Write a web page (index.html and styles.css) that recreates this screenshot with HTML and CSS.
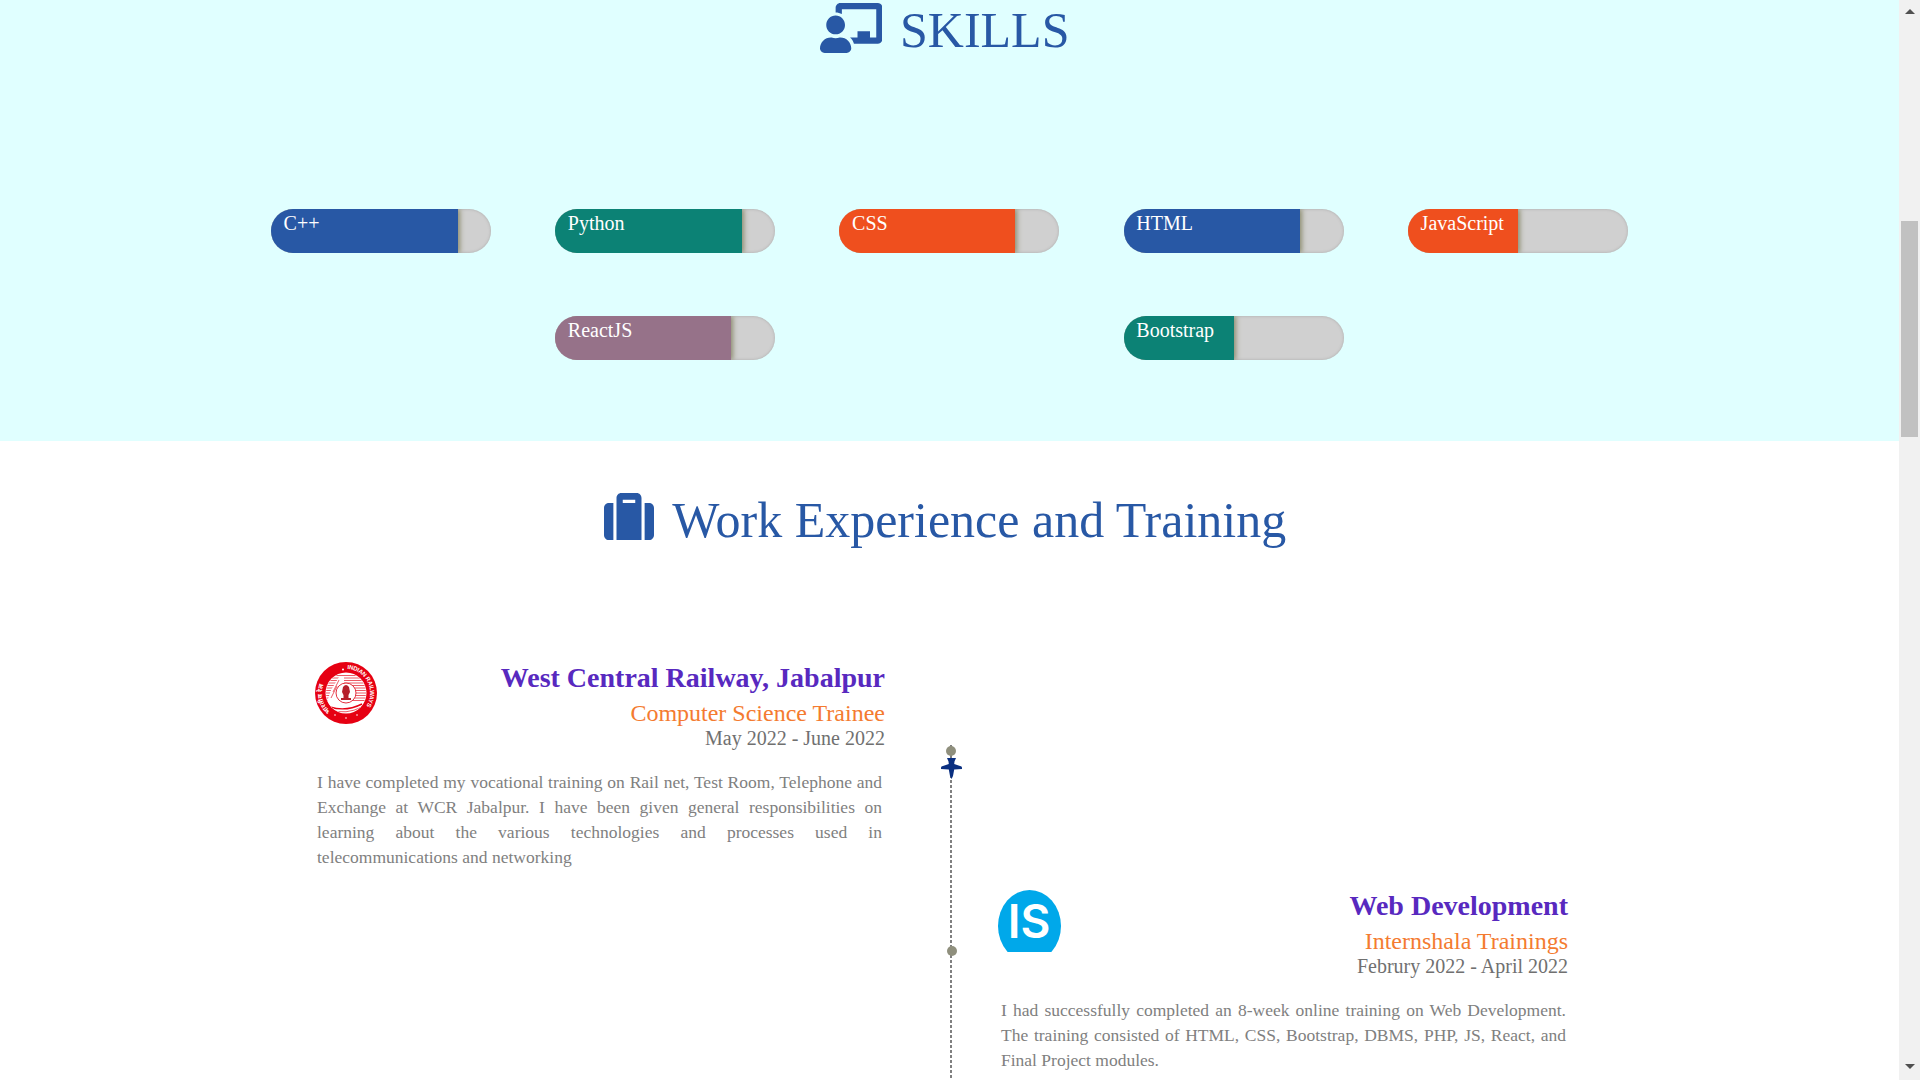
FILE: index.html
```html
<!DOCTYPE html>
<html lang="en">

<head>
    <meta charset="UTF-8">
    <meta name="viewport" content="width=device-width, initial-scale=1.0">
    <title>Portfolio</title>
    <link rel="stylesheet" href="styles.css">
</head>

<body>
    <div class="page">
        <section class="skills">
            <h2 class="heading">
                <svg class="heading-icon icon-skills" viewBox="0 0 640 512"><path d="M208 352c-2.39 0-4.78.35-7.06 1.09C187.98 357.3 174.35 360 160 360c-14.35 0-27.98-2.7-40.95-6.91-2.28-.74-4.66-1.09-7.05-1.09C49.94 352-.33 402.48 0 464.62.14 490.88 21.73 512 48 512h224c26.27 0 47.86-21.12 48-47.38.33-62.14-49.94-112.62-112-112.62zm-48-32c53.02 0 96-42.98 96-96s-42.98-96-96-96-96 42.98-96 96 42.98 96 96 96zM592 0H208c-26.47 0-48 22.25-48 49.59V96c23.42 0 45.1 6.78 64 17.8V64h352v288h-64v-64H384v64h-76.24c19.1 16.69 33.12 38.73 39.69 64H592c26.47 0 48-22.25 48-49.59V49.59C640 22.25 618.47 0 592 0z"/></svg>
                SKILLS
            </h2>
            <div class="skill-grid">
                <div class="bar"><div class="fill blue w85">C++</div></div>
                <div class="bar"><div class="fill teal w85">Python</div></div>
                <div class="bar"><div class="fill orange w80">CSS</div></div>
                <div class="bar"><div class="fill blue w80">HTML</div></div>
                <div class="bar"><div class="fill orange w50">JavaScript</div></div>
                <div class="bar col-2"><div class="fill mauve w80">ReactJS</div></div>
                <div class="bar col-4"><div class="fill teal w50">Bootstrap</div></div>
            </div>
        </section>

        <section class="work">
            <h2 class="heading heading-work">
                <svg class="heading-icon icon-work" viewBox="0 32 512 448" preserveAspectRatio="none"><path d="M128 480h256V80c0-26.5-21.5-48-48-48H176c-26.5 0-48 21.5-48 48v400zm64-384h128v32H192V96zm320 80v256c0 26.5-21.5 48-48 48h-48V128h48c26.5 0 48 21.5 48 48zM96 480H48c-26.5 0-48-21.5-48-48V176c0-26.5 21.5-48 48-48h48v352z"/></svg>
                Work Experience and Training
            </h2>

            <div class="timeline">
                <article class="card card-left">
                    <div class="card-head">
                        <svg class="logo" viewBox="0 0 62 62">
                            <defs>
                                <path id="ringEn" d="M32.3 7A24 24 0 0 1 51.4 43.7"/>
                                <path id="ringHi" d="M15.6 49.4A24 24 0 0 1 24.8 7.8"/>
                                <clipPath id="discClip"><circle cx="31" cy="31" r="20"/></clipPath>
                            </defs>
                            <circle cx="31" cy="31" r="31" fill="#e60012"/>
                            <circle cx="31" cy="31" r="20.5" fill="#fff"/>
                            <g clip-path="url(#discClip)">
                                <path d="M10 13.5H52M10 16H52M10 18.5H52M10 21H52M10 23.5H52M10 26H52M10 28.5H52M10 31H52M10 33.5H52M10 36H52M10 38.5H52" stroke="#ec5a66" stroke-width="1"/>
                                <path d="M10 46L16 28L24 15L29 14V52H12Z" fill="#fff"/>
                                <path d="M18 30L24 18M16 36L22 24" stroke="#ec5a66" stroke-width="1" fill="none"/>
                                <path d="M15 45Q31 50 47 42" stroke="#e60012" stroke-width="1.4" fill="none"/>
                                <path d="M15 48Q31 53 47 45" stroke="#ec5a66" stroke-width="1" fill="none"/>
                            </g>
                            <circle cx="31" cy="31" r="10" fill="#fff" stroke="#e2303e" stroke-width="1"/>
                            <path d="M28 25Q31 21 34 25L35 30L33.5 33V36H36V38H26V36H28.5V33L27 30Z" fill="#b5202c"/>
                            <text class="logo-ring"><textPath href="#ringEn" textLength="50">INDIAN RAILWAYS</textPath></text>
                            <text class="logo-ring logo-ring-hi"><textPath href="#ringHi">भारतीय रेल</textPath></text>
                            <circle cx="28" cy="7.5" r="1" fill="#fff"/>
                            <circle cx="20" cy="53" r=".8" fill="#fff"/>
                            <circle cx="31" cy="56" r=".8" fill="#fff"/>
                            <circle cx="42" cy="53" r=".8" fill="#fff"/>
                        </svg>
                        <div class="titles">
                            <h3>West Central Railway, Jabalpur</h3>
                            <h4>Computer Science Trainee</h4>
                            <h5>May 2022 - June 2022</h5>
                        </div>
                    </div>
                    <p>I have completed my vocational training on Rail net, Test Room, Telephone and Exchange at WCR Jabalpur. I have been given general responsibilities on learning about the various technologies and processes used in telecommunications and networking</p>
                </article>

                <div class="track">
                    <span class="dot"></span>
                    <svg class="plane" viewBox="0 0 21 21"><path d="M6 0H15L13.5 3.5L13.2 6L20.5 8.5Q21 9 21 10V11L13.2 11.5L12 18L10.5 21L9 18L7.8 11.5L0 11V10Q0 9 .5 8.5L7.8 6L7.5 3.5Z"/></svg>
                    <span class="dot dot-two"></span>
                </div>

                <article class="card card-right">
                    <div class="card-head">
                        <svg class="logo logo-wide" viewBox="0 0 63 62">
                            <ellipse cx="31.5" cy="36" rx="31.5" ry="36" fill="#00a8ea"/>
                            <text class="logo-is" x="31" y="48" text-anchor="middle">IS</text>
                        </svg>
                        <div class="titles">
                            <h3>Web Development</h3>
                            <h4>Internshala Trainings</h4>
                            <h5>Februry 2022 - April 2022</h5>
                        </div>
                    </div>
                    <p>I had successfully completed an 8-week online training on Web Development. The training consisted of HTML, CSS, Bootstrap, DBMS, PHP, JS, React, and Final Project modules.</p>
                </article>
            </div>
        </section>
    </div>

    <div class="scrollbar">
        <span class="arrow arrow-up"></span>
        <span class="thumb"></span>
        <span class="arrow arrow-down"></span>
    </div>
</body>

</html>
```

FILE: styles.css
```css
html,
body {
    margin: 0;
    height: 100%;
    overflow: hidden;
}

body {
    display: flex;
    font-family: "Liberation Serif", "Times New Roman", serif;
    background-color: #fff;
}

.page {
    flex: 1;
    height: 1080px;
    overflow: hidden;
}

/* headings */
.heading {
    display: flex;
    justify-content: center;
    align-items: flex-start;
    gap: 18px;
    margin: 0;
    padding-right: 10px;
    font-size: 50px;
    font-weight: 400;
    line-height: 60px;
    color: #2858a5;
}

.heading-icon {
    flex: none;
    height: 50px;
    fill: #2858a5;
}

.icon-skills {
    width: 62.5px;
    margin-top: 3px;
}

.icon-work {
    width: 50px;
    height: 47px;
    margin-top: 3px;
}

/* skills */
.skills {
    height: 441px;
    background-color: #e0ffff;
}

.skill-grid {
    display: grid;
    grid-template-columns: repeat(5, 220px);
    justify-content: center;
    column-gap: 64.25px;
    row-gap: 63px;
    margin-top: 149px;
    padding-right: 0.4px;
}

.bar {
    height: 44px;
    border-radius: 22px;
    background-color: #d0d0d0;
    box-shadow: inset 0 0 3px #aaa;
    overflow: hidden;
}

.col-2 {
    grid-column: 2;
}

.col-4 {
    grid-column: 4;
}

.fill {
    box-sizing: border-box;
    height: 44px;
    padding: 3px 0 0 12.8px;
    font-size: 20px;
    line-height: 23px;
    color: #fff;
    box-shadow: 2px 0 5px #8d8d6f;
}

.w85 {
    width: 85%;
}

.w80 {
    width: 80%;
}

.w50 {
    width: 50%;
}

.blue {
    background-color: #2858a5;
}

.teal {
    background-color: #0c8275;
}

.orange {
    background-color: #ef4f1e;
}

.mauve {
    background-color: #967289;
}

/* work experience */
.heading-work {
    gap: 18.5px;
    padding-top: 49px;
    padding-right: 9px;
}

.timeline {
    display: grid;
    grid-template-columns: 570px 113px 570px;
    grid-template-rows: 229px auto;
    margin: 111px 0 0 315px;
}

.card-left {
    grid-column: 1;
    grid-row: 1;
}

.card-left .logo {
    margin-top: 1px;
}

.card-right {
    grid-column: 3;
    grid-row: 2;
}

.card-right .titles {
    margin-top: -1px;
}

.card-head {
    display: flex;
    justify-content: space-between;
    align-items: flex-start;
}

.logo {
    flex: none;
    width: 62px;
    height: 62px;
}

.logo-wide {
    width: 63px;
}

.logo-ring {
    font-family: "Liberation Sans", sans-serif;
    font-size: 6px;
    font-weight: 700;
    fill: #fff;
}

.logo-ring-hi {
    font-family: "Noto Sans", "DejaVu Sans", sans-serif;
    font-size: 6.5px;
}

.logo-is {
    font-family: Inter, "Liberation Sans", sans-serif;
    font-size: 46px;
    font-weight: 600;
    fill: #fff;
}

.titles {
    text-align: right;
}

.titles h3 {
    margin: 0;
    font-size: 28px;
    line-height: 34px;
    color: #5829bf;
}

.titles h4 {
    margin: 2.5px 0 0;
    font-size: 24px;
    font-weight: 400;
    line-height: 31px;
    color: #f47b30;
}

.titles h5 {
    margin: 0;
    font-size: 20px;
    font-weight: 400;
    line-height: 19px;
    color: #707070;
}

.card p {
    margin: 22.5px 2px 0;
    font-size: 17.5px;
    line-height: 25px;
    text-align: justify;
    color: #808080;
}

.card-left p {
    margin-right: 3px;
}

.card-right p {
    margin-left: 3px;
}

/* centre line */
.track {
    grid-column: 2;
    grid-row: 1 / span 2;
    position: relative;
    justify-self: start;
    width: 2px;
    height: 335px;
    margin: 84px 0 0 65px;
    background: repeating-linear-gradient(to bottom, #808080 0 3px, transparent 3px 5px);
}

.dot {
    position: absolute;
    top: 1px;
    left: -4px;
    width: 10px;
    height: 10px;
    border-radius: 50%;
    background-color: #8f8f7d;
}

.dot-two {
    top: 201px;
    left: -3px;
}

.plane {
    position: absolute;
    top: 13px;
    left: -9px;
    width: 21px;
    height: 21px;
    fill: #0a2f80;
}

/* scrollbar */
.scrollbar {
    flex: none;
    display: flex;
    flex-direction: column;
    align-items: center;
    width: 21px;
    height: 1080px;
    background-color: #f1f1f1;
}

.arrow {
    width: 0;
    height: 0;
    border-left: 5px solid transparent;
    border-right: 5px solid transparent;
}

.arrow-up {
    margin-top: 9px;
    border-bottom: 5px solid #505050;
}

.thumb {
    width: 17px;
    height: 216px;
    margin-top: 207px;
    background-color: #c1c1c1;
}

.arrow-down {
    margin-top: 627px;
    border-top: 5px solid #505050;
}
```
